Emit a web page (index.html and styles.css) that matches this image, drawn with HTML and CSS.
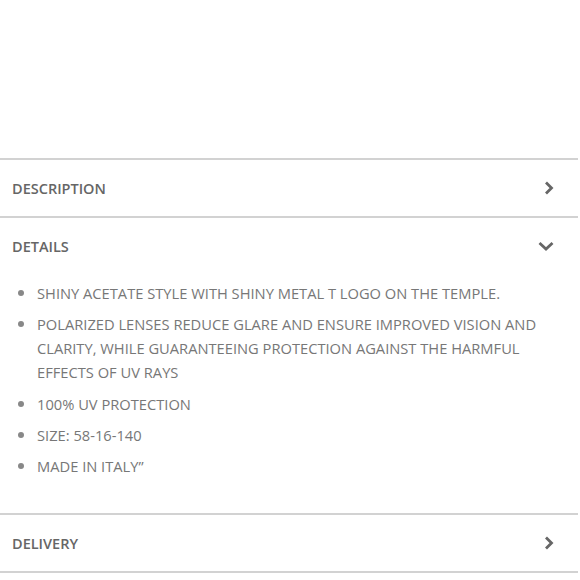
FILE: index.html
```html
<!DOCTYPE html>
<html>
<head>
<meta charset="utf-8">
<link rel="stylesheet" href="styles.css">
</head>
<body>
<div class="top-space"></div>
<section class="acc">
  <div class="acc-head">
    <span class="acc-title">DESCRIPTION</span>
    <svg class="chev" width="16" height="16" viewBox="0 0 16 16"><path d="M5 2.5 L10.5 8 L5 13.5" fill="none" stroke="#666" stroke-width="2.8"/></svg>
  </div>
</section>
<section class="acc">
  <div class="acc-head">
    <span class="acc-title">DETAILS</span>
    <svg class="chev down" width="16" height="16" viewBox="0 0 16 16"><path d="M1.5 5 L8 11 L14.5 5" fill="none" stroke="#666" stroke-width="2.8"/></svg>
  </div>
  <ul class="details">
    <li>SHINY ACETATE STYLE WITH SHINY METAL T LOGO ON THE TEMPLE.</li>
    <li>POLARIZED LENSES REDUCE GLARE AND ENSURE IMPROVED VISION AND CLARITY, WHILE GUARANTEEING PROTECTION AGAINST THE HARMFUL EFFECTS OF UV RAYS</li>
    <li>100% UV PROTECTION</li>
    <li>SIZE: 58-16-140</li>
    <li>MADE IN ITALY”</li>
  </ul>
</section>
<section class="acc last">
  <div class="acc-head">
    <span class="acc-title">DELIVERY</span>
    <svg class="chev" width="16" height="16" viewBox="0 0 16 16"><path d="M5 2.5 L10.5 8 L5 13.5" fill="none" stroke="#666" stroke-width="2.8"/></svg>
  </div>
</section>
</body>
</html>
```

FILE: styles.css
```css
body {
  margin: 0;
  background: #fff;
  font-family: "Open Sans", "Liberation Sans", sans-serif;
}
.top-space {
  height: 158px;
}
.acc {
  border-top: 2px solid #d2d2d2;
  width: 578px;
}
.acc.last {
  border-bottom: 2px solid #d2d2d2;
}
.acc-head {
  height: 56px;
  display: flex;
  align-items: center;
  justify-content: space-between;
  padding: 0 21px 0 12px;
}
.acc-title {
  font-size: 14.5px;
  font-weight: 600;
  color: #666;
}
.chev {
  display: block;
}
.chev.down {
  margin-right: 3px;
}
.details {
  margin: 0;
  padding: 7px 28px 28px 37px;
  color: #777;
  font-size: 14.7px;
  line-height: 24px;
}
.details li {
  margin-bottom: 7px;
}
.details li:nth-child(2) {
  margin-bottom: 8px;
}
.details li::marker {
  color: #888;
  font-size: 17px;
}
```
